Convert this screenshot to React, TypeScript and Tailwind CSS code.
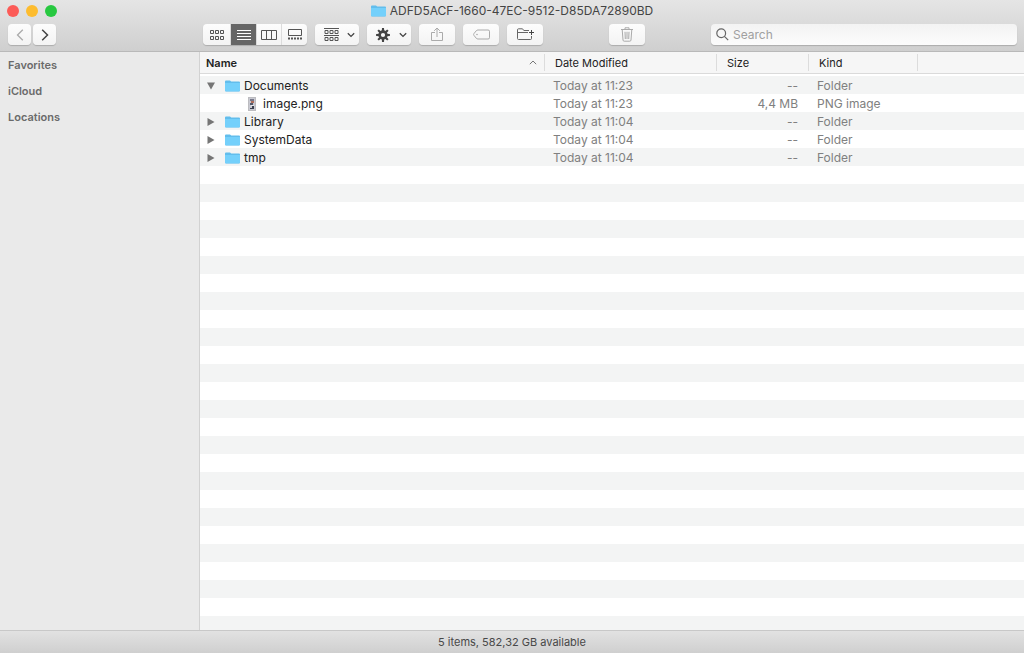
import { useState } from "react";
import type { ReactNode } from "react";

interface FileItem {
  name: string;
  modified: string;
  size: string;
  kind: string;
  children?: FileItem[];
}

const files: FileItem[] = [
  {
    name: "Documents",
    modified: "Today at 11:23",
    size: "--",
    kind: "Folder",
    children: [
      {
        name: "image.png",
        modified: "Today at 11:23",
        size: "4,4 MB",
        kind: "PNG image",
      },
    ],
  },
  { name: "Library", modified: "Today at 11:04", size: "--", kind: "Folder", children: [] },
  { name: "SystemData", modified: "Today at 11:04", size: "--", kind: "Folder", children: [] },
  { name: "tmp", modified: "Today at 11:04", size: "--", kind: "Folder", children: [] },
];

const sidebarSections = ["Favorites", "iCloud", "Locations"];

const gridCells = [0, 5, 10];

function FolderIcon() {
  return (
    <svg width="15" height="12" viewBox="0 0 15 12" className="shrink-0" aria-hidden="true">
      <path d="M0 1.5Q0 .5 1 .5H5L6.2 1.6H14Q15 1.6 15 2.6V10.6Q15 11.5 14 11.5H1Q0 11.5 0 10.6Z" fill="#62bdec" />
      <path d="M0 3H15V10.6Q15 11.3 14 11.3H1Q0 11.3 0 10.6Z" fill="#74d0fb" />
    </svg>
  );
}

function ImageIcon() {
  return (
    <svg width="8" height="14" viewBox="0 0 8 14" className="shrink-0" aria-hidden="true">
      <rect x=".5" y=".5" width="7" height="13" fill="#c9cad2" stroke="#bcbcc0" />
      <path d="M2 2H6V4H2Z" fill="#77788a" />
      <path d="M3 4H6V6H3Z" fill="#b0705f" />
      <path d="M2 6H5V8H2Z" fill="#555b6c" />
      <path d="M3 8H6V9H3Z" fill="#e7e7ec" />
      <path d="M4 9H6V11H4ZM2 11H6V12H2Z" fill="#3c4150" />
    </svg>
  );
}

function ChevronDown() {
  return (
    <svg width="8" height="6" viewBox="0 0 8 6" fill="none" stroke="#444" strokeWidth="1.3" aria-hidden="true">
      <path d="M.8 1.2 4 4.4 7.2 1.2" />
    </svg>
  );
}

function GearIcon() {
  return (
    <svg width="14" height="14" viewBox="-7 -7 14 14" aria-hidden="true">
      {[0, 45, 90, 135].map((angle) => (
        <path
          key={angle}
          d="M-1-6.9H1L1.3-3H-1.3ZM-1 6.9H1L1.3 3H-1.3Z"
          fill="#444"
          transform={`rotate(${angle})`}
        />
      ))}
      <circle r="3.4" fill="none" stroke="#444" strokeWidth="2.6" />
    </svg>
  );
}

function ToolbarButton({ label, wide, children }: { label: string; wide?: boolean; children: ReactNode }) {
  return (
    <button
      aria-label={label}
      className={`${
        wide ? "w-11 justify-between pl-[9px] pr-1" : "w-9 justify-center"
      } flex h-[21px] shrink-0 items-center rounded bg-linear-to-b from-[#fdfdfd] to-[#f3f3f3] shadow-[0_1px_1px_rgba(0,0,0,0.18)]`}
    >
      {children}
    </button>
  );
}

function ViewSwitcher() {
  const [view, setView] = useState("list");

  const views = [
    {
      id: "icons",
      icon: (
        <svg width="14" height="11" viewBox="0 0 14 11" fill="none" stroke="currentColor">
          {gridCells.map((x) => (
            <path key={x} d={`M${x + 0.5} 1.5h3v3h-3zM${x + 0.5} 7.5h3v3h-3z`} />
          ))}
        </svg>
      ),
    },
    {
      id: "list",
      icon: (
        <svg width="14" height="11" viewBox="0 0 14 11" fill="none" stroke="currentColor">
          <path d="M0 1.5H14M0 4.5H14M0 7.5H14M0 10.5H14" />
        </svg>
      ),
    },
    {
      id: "columns",
      icon: (
        <svg width="16" height="10" viewBox="0 0 16 10" fill="none" stroke="currentColor">
          <path d="M.5.5H15.5V9.5H.5ZM5.5.5V9.5M10.5.5V9.5" />
        </svg>
      ),
    },
    {
      id: "gallery",
      icon: (
        <svg width="14" height="11" viewBox="0 0 14 11" fill="none" stroke="currentColor">
          <path d="M.5.5H13.5V6.5H.5Z" />
          <path d="M0 9.5H14" strokeWidth="2" strokeDasharray="2 1" />
        </svg>
      ),
    },
  ];

  return (
    <div className="grid h-[21px] w-[104px] shrink-0 grid-cols-[28px_26px_25px_25px] overflow-hidden rounded bg-linear-to-b from-[#fdfdfd] to-[#f3f3f3] shadow-[0_1px_1px_rgba(0,0,0,0.18)]">
      {views.map((v) => (
        <button
          key={v.id}
          aria-label={`${v.id} view`}
          aria-pressed={view === v.id}
          onClick={() => setView(v.id)}
          className={`flex items-center justify-center border-r border-[#dcdcdc] last:border-r-0 ${
            view === v.id ? "bg-[#666] text-white" : "text-[#555]"
          }`}
        >
          {v.icon}
        </button>
      ))}
    </div>
  );
}

function Toolbar() {
  return (
    <header className="h-[52px] shrink-0 border-b border-[#b9b9b9] bg-linear-to-b from-[#e5e5e5] to-[#cfcfcf]">
      <div className="grid h-6 grid-cols-[1fr_auto_1fr] items-center pb-0.5">
        <div className="flex gap-[7px] pl-[7px]">
          <button aria-label="Close" className="size-3 rounded-full bg-[#fc5b57]" />
          <button aria-label="Minimize" className="size-3 rounded-full bg-[#fdbc2e]" />
          <button aria-label="Zoom" className="size-3 rounded-full bg-[#27c840]" />
        </div>
        <h1 className="flex items-center gap-1 text-[12px] leading-5 text-[#444]">
          <FolderIcon />
          ADFD5ACF-1660-47EC-9512-D85DA72890BD
        </h1>
      </div>

      <div className="flex pr-[7px]">
        <nav className="flex w-[203px] shrink-0 gap-0.5 pl-2">
          <button
            aria-label="Back"
            disabled
            className="flex h-[21px] w-[23px] items-center justify-center rounded bg-linear-to-b from-[#fdfdfd] to-[#f3f3f3] text-[#aaa] shadow-[0_1px_1px_rgba(0,0,0,0.18)]"
          >
            <svg width="8" height="12" viewBox="0 0 8 12" fill="none" stroke="currentColor" strokeWidth="1.3">
              <path d="M6.8.8 1.5 6 6.8 11.2" />
            </svg>
          </button>
          <button
            aria-label="Forward"
            className="flex h-[21px] w-[23px] items-center justify-center rounded bg-linear-to-b from-[#fdfdfd] to-[#f3f3f3] text-[#444] shadow-[0_1px_1px_rgba(0,0,0,0.18)]"
          >
            <svg width="8" height="12" viewBox="0 0 8 12" fill="none" stroke="currentColor" strokeWidth="1.5">
              <path d="M1.2.8 6.5 6 1.2 11.2" />
            </svg>
          </button>
        </nav>

        <div className="flex flex-1 gap-2">
          <ViewSwitcher />
          <ToolbarButton label="Group items" wide>
            <svg width="15" height="13" viewBox="0 0 15 13" fill="none" stroke="#555">
              <path d="M0 .5H15M0 7.5H15" />
              {gridCells.map((x) => (
                <path key={x} d={`M${x + 1} 2.5h3v3h-3zM${x + 1} 9.5h3v3h-3z`} />
              ))}
            </svg>
            <ChevronDown />
          </ToolbarButton>
          <ToolbarButton label="Actions" wide>
            <GearIcon />
            <ChevronDown />
          </ToolbarButton>
          <ToolbarButton label="Share">
            <svg width="12" height="15" viewBox="0 0 12 15" fill="none" stroke="#aaa">
              <path d="M4 5.5H.5V13.5H11.5V5.5H8M6 10V1.2M3.2 3.8 6 1 8.8 3.8" />
            </svg>
          </ToolbarButton>
          <ToolbarButton label="Edit tags">
            <svg width="17" height="11" viewBox="0 0 17 11" fill="none" stroke="#aaa">
              <path d="M5 1H15Q16.5 1 16.5 2.2V8.8Q16.5 10 15 10H5Q4 10 3.3 9.3L.9 6.3Q.3 5.5.9 4.7L3.3 1.7Q4 1 5 1Z" />
              <circle cx="4" cy="5.5" r=".4" />
            </svg>
          </ToolbarButton>
          <ToolbarButton label="New folder">
            <svg width="17" height="13" viewBox="0 0 17 13" fill="none" stroke="#666">
              <path d="M12 2.5H6.8L5.5.8H1.5Q.5.8.5 1.8V10.5Q.5 11.5 1.5 11.5H13.5Q14.5 11.5 14.5 10.5V8M.5 4.5H11" />
              <path d="M14.5 2V7M12 4.5H17" stroke="#444" />
            </svg>
          </ToolbarButton>
          <div className="w-[50px] shrink-0" />
          <ToolbarButton label="Move to trash">
            <svg width="12" height="15" viewBox="0 0 12 15" fill="none" stroke="#aaa">
              <path d="M0 2.5H12M4 2.3V.8H8V2.3M1.2 2.5 2 13Q2 14.2 3.2 14.2H8.8Q10 14.2 10 13L10.8 2.5M4 4.8 4.3 12M6 4.8V12M8 4.8 7.7 12" />
            </svg>
          </ToolbarButton>
          <div className="w-[50px] shrink-0" />
          <label className="flex h-[21px] min-w-0 flex-1 items-center gap-1 rounded bg-linear-to-b from-[#f3f3f3] to-[#fcfcfc] pl-[5px] shadow-[0_1px_1px_rgba(0,0,0,0.18)]">
            <svg width="13" height="13" viewBox="0 0 13 13" fill="none" stroke="#666" strokeWidth="1.2" className="shrink-0">
              <circle cx="5.2" cy="5.2" r="4.4" />
              <path d="M8.4 8.4 12.2 12.2" />
            </svg>
            <input
              type="text"
              placeholder="Search"
              aria-label="Search"
              className="min-w-0 flex-1 bg-transparent text-[12px] leading-5 outline-none placeholder:text-[#a0a0a0]"
            />
          </label>
        </div>
      </div>
    </header>
  );
}

function HeaderCell({ children, first }: { children?: ReactNode; first?: boolean }) {
  return (
    <th scope="col" className="p-0 pb-0.5 font-normal">
      <div className="flex h-[22px] items-center border-b border-[#dadada] bg-[#f6f6f6] py-0.5">
        <div
          className={`flex h-full flex-1 items-center justify-between pr-[7px] ${first ? "pl-1.5" : "pl-2.5"} ${
            children ? "border-r border-[#dcdcdc]" : ""
          }`}
        >
          {children}
        </div>
      </div>
    </th>
  );
}

function FileRow({ item, nested }: { item: FileItem; nested?: boolean }) {
  const [open, setOpen] = useState(item.name === "Documents");

  return (
    <>
      <tr className="h-[18px] text-[#808080]">
        <td className="p-0 pt-0.5">
          <div className={`flex items-center text-[#222] ${nested ? "gap-[7px] pl-12" : "gap-1 pl-1.5"}`}>
            {item.children && (
              <button
                aria-label={`Toggle ${item.name}`}
                aria-expanded={open}
                onClick={() => setOpen(!open)}
                className="mr-[5px] flex w-2.5 justify-center"
              >
                <svg width="8" height="8" viewBox="0 0 8 8" fill="#757575">
                  <path d={open ? "M0 .5H8L4 7.5Z" : "M.5 0V8L7.5 4Z"} />
                </svg>
              </button>
            )}
            {item.children ? <FolderIcon /> : <ImageIcon />}
            {item.name}
          </div>
        </td>
        <td className="p-0 pt-0.5 pl-2">{item.modified}</td>
        <td className="p-0 pt-0.5 pr-[11px] text-right">{item.size}</td>
        <td className="p-0 pt-0.5 pl-2">{item.kind}</td>
        <td className="p-0" />
      </tr>
      {open && item.children?.map((child) => <FileRow key={child.name} item={child} nested />)}
    </>
  );
}

export default function App() {
  return (
    <div className="flex h-screen flex-col overflow-hidden bg-white font-['Inter','Liberation_Sans',sans-serif]">
      <Toolbar />

      <div className="flex min-h-0 flex-1">
        <aside className="w-[200px] shrink-0 border-r border-[#d2d2d2] bg-[#eaeaea] px-2 pt-1">
          <ul className="text-[11px] font-semibold text-[#6a6a6a]">
            {sidebarSections.map((section) => (
              <li key={section} className="h-[26px] leading-[18px]">
                {section}
              </li>
            ))}
          </ul>
        </aside>

        {/* zebra stripes continue below the last row */}
        <main className="min-w-0 flex-1 overflow-hidden bg-[repeating-linear-gradient(to_bottom,#f3f4f4_0_18px,#fff_18px_36px)] bg-[position:0_24px] bg-no-repeat">
          <table className="w-full table-fixed border-collapse text-left text-[12px] leading-4">
            <colgroup>
              <col className="w-[345px]" />
              <col className="w-[172px]" />
              <col className="w-[92px]" />
              <col className="w-[109px]" />
              <col />
            </colgroup>
            <thead className="bg-white text-[11px] text-[#222]">
              <tr>
                <HeaderCell first>
                  <span className="font-semibold">Name</span>
                  <svg width="8" height="5" viewBox="0 0 8 5" fill="none" stroke="#777">
                    <path d="M.8 4.2 4 1 7.2 4.2" />
                  </svg>
                </HeaderCell>
                <HeaderCell>Date Modified</HeaderCell>
                <HeaderCell>Size</HeaderCell>
                <HeaderCell>Kind</HeaderCell>
                <HeaderCell />
              </tr>
            </thead>
            <tbody>
              {files.map((item) => (
                <FileRow key={item.name} item={item} />
              ))}
            </tbody>
          </table>
        </main>
      </div>

      <footer className="h-[23px] shrink-0 border-t border-[#c8c8c8] bg-linear-to-b from-[#e2e2e2] to-[#cfcfcf] text-center text-[11px] leading-[22px] text-[#484848]">
        5 items, 582,32 GB available
      </footer>
    </div>
  );
}
